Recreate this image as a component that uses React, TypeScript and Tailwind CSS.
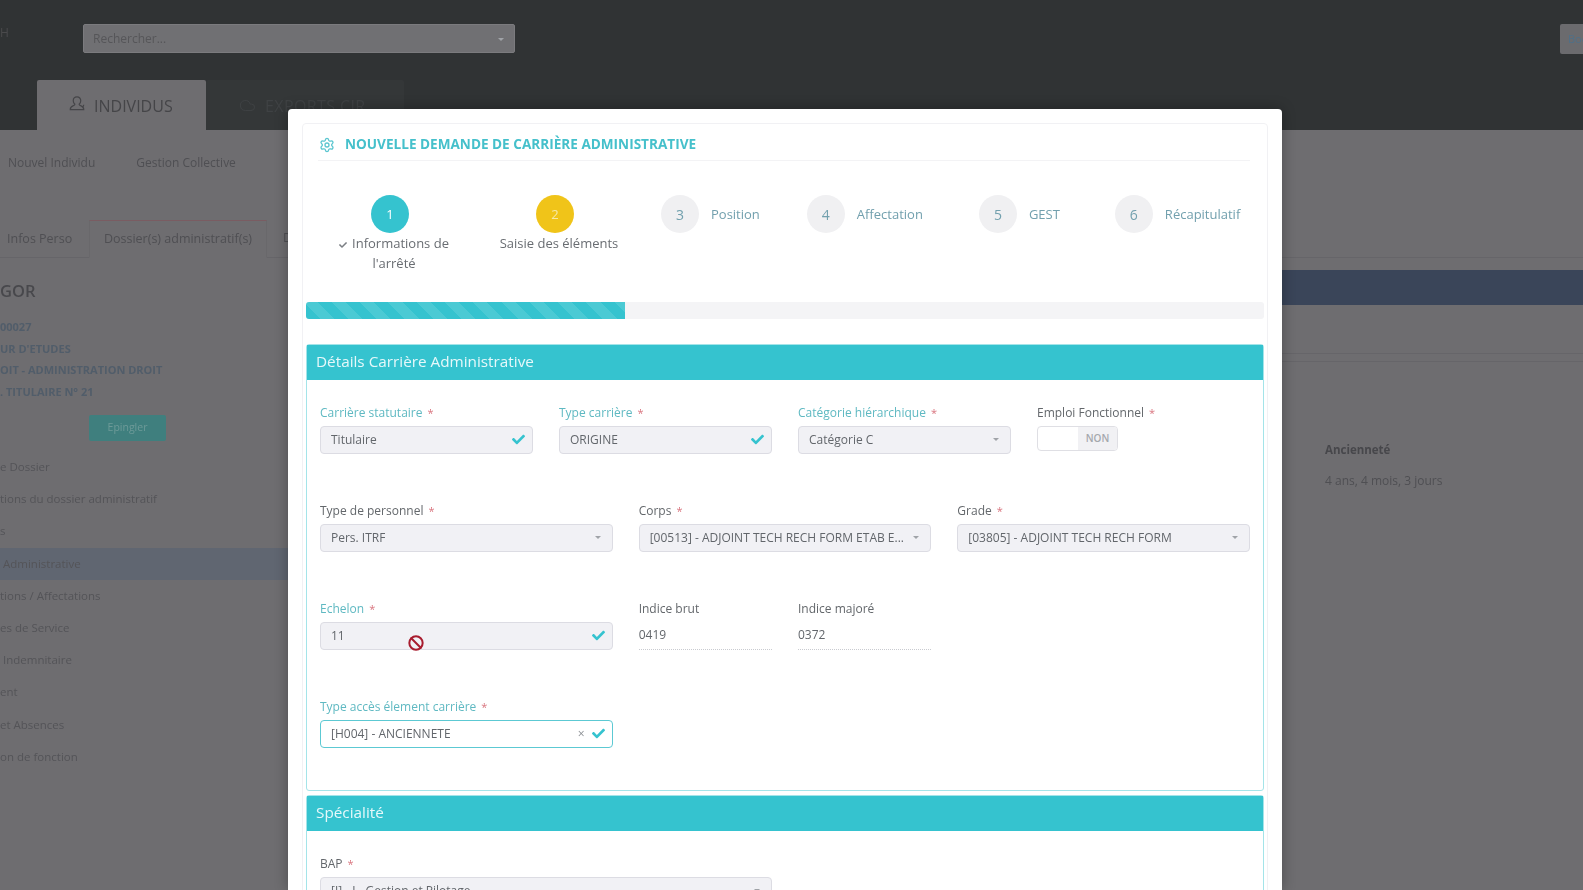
import { Ban, Cloud, Settings } from 'lucide-react'
import { FaCheck } from 'react-icons/fa'

const steps = [
  { n: 3, label: 'Position', cls: 'ml-[41px]' },
  { n: 4, label: 'Affectation', cls: 'ml-[47px]' },
  { n: 5, label: 'GEST', cls: 'ml-[56px]' },
  { n: 6, label: 'Récapitulatif', cls: 'ml-[55px]' },
]

const menu = [
  { label: 'e Dossier' },
  { label: 'tions du dossier administratif' },
  { label: 's' },
  { label: ' Administrative', active: true },
  { label: 'tions / Affectations' },
  { label: 'es de Service' },
  { label: ' Indemnitaire' },
  { label: 'ent' },
  { label: 'et Absences' },
  { label: 'on de fonction' },
]

function Caret() {
  return <span className="h-0 w-0 border-x-[3px] border-t-[3px] border-x-transparent border-t-[#a0a3a8]" />
}

function Label({ text, teal, required = true }: { text: string; teal?: boolean; required?: boolean }) {
  return (
    <div className={`h-[20px] text-[12px] leading-[20px] ${teal ? 'text-[#5fb9c2]' : 'text-[#63676b]'}`}>
      {text}
      {required && <span className="ml-[5px] text-[11px] text-[#d9757f]">*</span>}
    </div>
  )
}

function SelectField({ label, value, teal, check, span }: { label: string; value: string; teal?: boolean; check?: boolean; span: string }) {
  return (
    <div className={span}>
      <Label text={label} teal={teal} />
      <div className="mt-[2.5px] flex h-[28px] items-center justify-between rounded-[4px] border border-[#dcdce3] bg-[#f1f1f5] pl-[10px] pr-[7px] text-[12px] text-[#62666b]">
        <span className="truncate">{value}</span>
        {check ? <FaCheck className="text-[13px] text-[#35c3cf]" /> : <span className="mr-[4px] flex"><Caret /></span>}
      </div>
    </div>
  )
}

function ReadField({ label, value, span }: { label: string; value: string; span: string }) {
  return (
    <div className={span}>
      <Label text={label} required={false} />
      <div className="mt-[2.5px] flex h-[28px] items-center border-b border-dotted border-[#c9cbd0] text-[12px] text-[#62666b]">{value}</div>
    </div>
  )
}

function Background() {
  // 4px bleed on each side so the blur doesn't fade out at the page edge
  return (
    <div className="-mx-[4px] -mt-[4px] flex h-[898px] flex-col blur-[0.6px]">
      <div className="flex h-[134px] flex-col justify-between bg-[#303334] pl-[4px] pr-[4px] pt-[4px]">
        <div className="flex items-start justify-between pt-[24px]">
          <div className="flex">
            <span className="w-[83px] text-[12px] text-[#4a4a4c]">H</span>
            <div className="flex h-[29px] w-[432px] items-center justify-between rounded-[2px] border border-[#7b7b7e] bg-[#707073] pl-[9px] pr-[10px] pt-[1px] text-[12px] text-[#565659]">
              Rechercher...
              <Caret />
            </div>
          </div>
          <div className="h-[30px] w-[23px] overflow-hidden whitespace-nowrap rounded-l-[2px] bg-[#6b6b6e] pl-[8px] text-[11px] leading-[30px] text-[#4f7088]">Boo</div>
        </div>
        <div className="flex h-[50px] pl-[37px]">
          <div className="flex w-[169px] items-center gap-[8px] rounded-t-[2px] bg-[#6e6d70] pl-[31px] pt-[1px] text-[16px] text-[#454548]">
            <svg viewBox="0 0 24 24" className="h-[18px] w-[18px] -translate-y-[2px]" fill="none" stroke="currentColor" strokeWidth="1.6">
              <path d="M12 2.5c-3 0-5 2.2-5 5.2 0 2 .9 3.7 2.2 4.6-.1 1-.9 1.6-2.6 2.2C4.200 15.400 3 16.800 3 19.500h18c0-2.700-1.200-4.100-3.600-5-1.700-.6-2.500-1.200-2.600-2.200 1.300-.9 2.200-2.600 2.200-4.600 0-3-2-5.200-5-5.200z" />
              <path d="M19 16c1.500-.5 2-1.500 2-3" />
            </svg>
            INDIVIDUS
          </div>
          <div className="flex w-[198px] items-center gap-[9px] rounded-t-[2px] bg-[#343738] pl-[33px] pt-[1px] text-[16px] tracking-[0.4px] text-[#3f4244]">
            <Cloud size={17} strokeWidth={1.4} />
            EXPORTS CIR
          </div>
        </div>
      </div>
      <div className="flex-1 bg-[#6e6d70] pl-[4px] text-[12px] text-[#4f4f53]">
        <div className="flex h-[90px] items-start pl-[8px] pt-[24px] leading-[18px]">
          <span>Nouvel Individu</span>
          <span className="ml-[41px]">Gestion Collective</span>
        </div>
        <div className="flex h-[38px] items-stretch border-b border-[#666569] text-[12.500px]">
          <span className="flex w-[89px] items-center pl-[7px] pt-[1px]">Infos Perso</span>
          <span className="-mb-px flex w-[178px] items-center justify-center border-l border-r border-t border-b border-l-[#69686b] border-r-[#69686b] border-t-[#7a5c62] border-b-[#6e6d70] pt-[1px]">Dossier(s) administratif(s)</span>
          <span className="flex items-center pl-[16px]">D</span>
        </div>
        <div className="flex">
          <div className="w-[288px] shrink-0">
            <div className="pt-[23px] text-[16.500px] font-semibold leading-[20px] text-[#48484c]">GOR</div>
            <div className="mt-[15px] text-[11px] font-bold leading-[21.5px] text-[#515d6a]">
              <div>00027</div>
              <div>UR D'ETUDES</div>
              <div>OIT - ADMINISTRATION DROIT</div>
              <div>. TITULAIRE N° 21</div>
            </div>
            <div className="ml-[89px] mt-[13px] flex h-[26px] w-[77px] items-center justify-center rounded-[2px] bg-[#3f7f7e] text-[10.500px] text-[#6d9a98]">Epingler</div>
            <div className="mt-[10px]">
              {menu.map(item => (
                <div key={item.label} className={`-ml-[4px] h-[32.2px] whitespace-pre pl-[4px] text-[11.500px] leading-[32px] text-[#545458] ${item.active ? 'bg-[#606671]' : ''}`}>
                  {item.label}
                </div>
              ))}
            </div>
          </div>
          <div className="flex-1">
            <div className="mt-[12px] h-[35px] bg-[#3a4559]" />
            <div className="mt-[48px] h-[9px] border-y border-[#666569]" />
            <div className="ml-[1037px] mt-[79px] text-[11.500px] font-bold leading-[18px] text-[#47474b]">Ancienneté</div>
            <div className="ml-[1037px] mt-[13px] text-[12px] leading-[18px] text-[#4f4f53]">4 ans, 4 mois, 3 jours</div>
          </div>
        </div>
      </div>
    </div>
  )
}

function Modal() {
  return (
    <div className="absolute left-[288px] top-[109px] h-[781px] w-[994px] overflow-hidden rounded-t-[4px] bg-white p-[14px] shadow-[0_0_14px_rgba(0,0,0,0.3)] blur-[0.4px]">
      <div className="h-[800px] rounded-[4px] border border-[#f1f1f4] px-[3px]">
        <div className="ml-[12px] mr-[14px] flex h-[37px] items-center gap-[10px] border-b border-[#f3f3f5] pt-[5px] text-[13.580px] font-bold text-[#45c0cb]">
          <Settings size={16} strokeWidth={2} className="ml-[1px] text-[#5cc6d0]" />
          NOUVELLE DEMANDE DE CARRIÈRE ADMINISTRATIVE
        </div>
        <div className="flex h-[141px] items-start pl-[19px] pt-[34px] text-[13px]">
          <div className="flex w-[130px] flex-col items-center text-center leading-[20px] text-[#696d72]">
            <span className="flex h-[38px] w-[38px] items-center justify-center rounded-full bg-[#35c3cf] text-white">1</span>
            <span className="pl-[8px]"><FaCheck className="mr-[5px] inline text-[8px] text-[#7b7f84]" />Informations de<br />l'arrêté</span>
          </div>
          <div className="ml-[35px] flex w-[130px] flex-col items-center leading-[20px] text-[#696d72]">
            <span className="flex h-[38px] w-[38px] items-center justify-center rounded-full bg-[#f0c419] text-[#f6e9a8]">2</span>
            <span className="whitespace-nowrap pl-[8px]">Saisie des éléments</span>
          </div>
          {steps.map(step => (
            <div key={step.n} className={`flex items-center gap-[12px] text-[#72a0ae] ${step.cls}`}>
              <span className="flex h-[38px] w-[38px] items-center justify-center rounded-full bg-[#f0f0f2] text-[14px]">{step.n}</span>
              <span className="pt-[2px]">{step.label}</span>
            </div>
          ))}
        </div>
        <div className="h-[17px] overflow-hidden rounded-[3px] bg-[#f4f4f6]">
          <div className="h-full w-[33.33%] bg-[repeating-linear-gradient(45deg,#35c3cf_0,#35c3cf_10px,#4bcad4_10px,#4bcad4_20px)]" />
        </div>
        <section className="mt-[25px] h-[447px] rounded-[3px] border border-[#a4e4e9]">
          <h2 className="flex h-[35px] items-center bg-[#35c3cf] pb-[3px] pl-[9px] text-[15.300px] text-[#e6f8fa]">Détails Carrière Administrative</h2>
          <div className="grid grid-cols-12 gap-x-[26px] gap-y-[47.5px] px-[13px] pt-[23px]">
            <SelectField span="col-span-3" label="Carrière statutaire" value="Titulaire" teal check />
            <SelectField span="col-span-3" label="Type carrière" value="ORIGINE" teal check />
            <SelectField span="col-span-3" label="Catégorie hiérarchique" value="Catégorie C" teal />
            <div className="col-span-3">
              <Label text="Emploi Fonctionnel" />
              <div className="mt-[2.5px] flex h-[25px] w-[81px] overflow-hidden rounded-[4px] border border-[#dfdfe4] bg-white">
                <span className="w-[40px]" />
                <span className="flex-1 bg-[#f1f1f4] text-center text-[10px] font-semibold leading-[23px] text-[#a5a8ad]">NON</span>
              </div>
            </div>
            <SelectField span="col-span-4" label="Type de personnel" value="Pers. ITRF" />
            <SelectField span="col-span-4" label="Corps" value="[00513] - ADJOINT TECH RECH FORM ETAB E..." />
            <SelectField span="col-span-4" label="Grade" value="[03805] - ADJOINT TECH RECH FORM" />
            <SelectField span="col-span-4" label="Echelon" value="11" teal check />
            <ReadField span="col-span-2" label="Indice brut" value="0419" />
            <ReadField span="col-span-2" label="Indice majoré" value="0372" />
            <div className="col-span-4" />
            <div className="col-span-4">
              <Label text="Type accès élement carrière" teal />
              <div className="mt-[2.5px] flex h-[28px] items-center rounded-[4px] border border-[#5cc9d3] bg-white pl-[10px] pr-[7px] text-[12px] text-[#62666b]">
                <span className="flex-1">[H004] - ANCIENNETE</span>
                <span className="mr-[7px] text-[12px] leading-none text-[#8a8e93]">×</span>
                <FaCheck className="text-[13px] text-[#35c3cf]" />
              </div>
            </div>
          </div>
        </section>
        <section className="mt-[4px] rounded-t-[3px] border border-[#a4e4e9]">
          <h2 className="flex h-[35px] items-center bg-[#35c3cf] pb-[3px] pl-[9px] text-[15.300px] text-[#e6f8fa]">Spécialité</h2>
          <div className="grid grid-cols-12 gap-x-[26px] px-[13px] pt-[23px]">
            <SelectField span="col-span-6" label="BAP" value="[J] - J - Gestion et Pilotage" />
          </div>
        </section>
      </div>
    </div>
  )
}

export default function App() {
  return (
    <div className="relative h-[890px] w-[1583px] overflow-hidden font-['Open_Sans',sans-serif]">
      <Background />
      <Modal />
      <Ban size={16} strokeWidth={3} className="absolute left-[408px] top-[635px] text-[#a81c2e]" />
    </div>
  )
}
